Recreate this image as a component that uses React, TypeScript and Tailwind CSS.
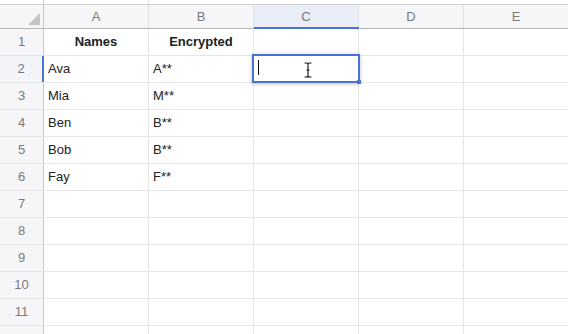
import React from "react";

const cols = ["A", "B", "C", "D", "E"];
const data: Record<number, [string, string, boolean]> = {
  1: ["Names", "Encrypted", true],
  2: ["Ava", "A**", false],
  3: ["Mia", "M**", false],
  4: ["Ben", "B**", false],
  5: ["Bob", "B**", false],
  6: ["Fay", "F**", false],
};

export default function App() {
  const rows = Array.from({ length: 12 }, (_, i) => i + 1);
  return (
    <div
      className="relative w-[568px] h-[334px] overflow-hidden bg-white text-[#222]"
      style={{ fontFamily: '"Liberation Sans", Arial, sans-serif' }}
    >
      <div className="h-[4px] flex">
        <div className="w-[44px] shrink-0 border-r border-[#c8c8c8]" />
        <div className="w-[105px] shrink-0 border-r border-[#e3e3e3]" />
      </div>
      {/* header */}
      <div className="flex h-[25px] border-y border-[#d0d0d0] border-b-[#b8b8b8] bg-[#f6f6f8]">
        <div className="relative w-[44px] shrink-0 border-r border-[#c8c8c8]">
          <div className="absolute left-[28px] top-[8px] w-0 h-0 border-l-[12px] border-l-transparent border-b-[12px] border-b-[#c4c4c4]" />
        </div>
        {cols.map((c) =>
          c === "C" ? (
            <div
              key={c}
              className="relative w-[105px] shrink-0 border-r border-[#e0e0e0] bg-[#e8edf7] flex items-center justify-center text-[13px] text-[#7a7a7a]"
            >
              {c}
              <div className="absolute left-0 right-[-1px] bottom-[-1px] h-[2px] bg-[#4a72d6]" />
            </div>
          ) : (
            <div
              key={c}
              className="w-[105px] shrink-0 border-r border-[#e0e0e0] flex items-center justify-center text-[13px] text-[#7a7a7a]"
            >
              {c}
            </div>
          )
        )}
      </div>
      {rows.map((r) => {
        const d = data[r];
        return (
          <div key={r} className="flex h-[27px] border-b border-[#e6e6e6]">
            <div
              className={
                r === 2
                  ? "w-[44px] shrink-0 bg-[#f3f4f8] border-r-2 border-r-[#4a72d6] flex items-center justify-center text-[13px] text-[#7a7a7a]"
                  : "w-[44px] shrink-0 bg-[#f6f6f8] border-r border-[#c8c8c8] flex items-center justify-center text-[13px] text-[#7a7a7a]"
              }
            >
              {r}
            </div>
            {cols.map((c, ci) => {
              let content: React.ReactNode = null;
              if (d && ci < 2) {
                content = d[ci];
              }
              const bold = d && d[2];
              return (
                <div
                  key={c}
                  className={
                    "w-[105px] shrink-0 border-r border-[#e6e6e6] flex items-center text-[13px] " +
                    (bold ? "justify-center font-bold" : "pl-[4px]")
                  }
                >
                  {content}
                </div>
              );
            })}
          </div>
        );
      })}
      {/* selected cell */}
      <div className="absolute left-[252px] top-[54px] w-[108px] h-[29px] border-2 border-[#4a72d6] shadow-[0_1px_4px_rgba(0,0,0,0.25)]">
        <div className="absolute left-[4px] top-[4px] w-[1px] h-[15px] bg-[#111]" />
        <div className="absolute right-[-3px] bottom-[-3px] w-[4px] h-[4px] bg-[#4a72d6]" />
      </div>
      {/* I-beam */}
      <svg className="absolute left-[303px] top-[62px]" width="10" height="16" viewBox="0 0 10 16">
        <path d="M1.5 1 H3.5 Q5 1 5 2.5 Q5 1 6.5 1 H8.5 M5 2.5 V13.5 M1.5 15 H3.5 Q5 15 5 13.5 Q5 15 6.5 15 H8.5 M3.5 8 H6.5" stroke="#fff" strokeWidth="2.6" fill="none" />
        <path d="M1.5 1 H3.5 Q5 1 5 2.5 Q5 1 6.5 1 H8.5 M5 2.5 V13.5 M1.5 15 H3.5 Q5 15 5 13.5 Q5 15 6.5 15 H8.5 M3.5 8 H6.5" stroke="#111" strokeWidth="1.1" fill="none" />
      </svg>
    </div>
  );
}
